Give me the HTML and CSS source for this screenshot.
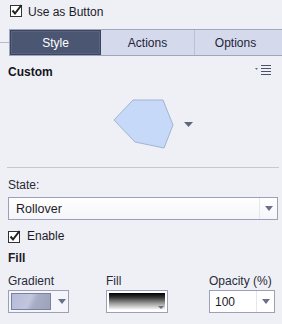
FILE: index.html
```html
<!DOCTYPE html>
<html lang="en">
<head>
  <meta charset="UTF-8">
  <title>Button Style</title>
  <link rel="stylesheet" href="styles.css">
</head>
<body>

  <div class="check-row top">
    <svg class="check" width="13" height="13" viewBox="0 0 13 13">
      <rect x="0.5" y="1.5" width="11" height="11" fill="#fff" stroke="#333"/>
      <path d="M2.5 6.5 L5 9.5 L11.5 1" fill="none" stroke="#222" stroke-width="2"/>
    </svg>
    <span>Use as Button</span>
  </div>

  <div class="tabs-row">
    <div class="tabs-lead"></div>
    <div class="tabs">
      <div class="tab active">Style</div>
      <div class="tab">Actions</div>
      <div class="tab">Options</div>
    </div>
  </div>

  <div class="section-head">
    <span class="bold">Custom</span>
    <svg class="menu-icon" width="17" height="11" viewBox="0 0 17 11">
      <path d="M0 3 L3 3 L1.5 5 Z" fill="#6a7088"/>
      <rect x="6" y="0" width="10" height="1" fill="#4a5270"/>
      <rect x="6" y="3" width="10" height="1" fill="#4a5270"/>
      <rect x="6" y="6" width="10" height="1" fill="#4a5270"/>
      <rect x="6" y="9" width="10" height="1" fill="#4a5270"/>
    </svg>
  </div>

  <div class="shape-row">
    <svg width="84" height="52" viewBox="0 0 84 52">
      <polygon points="21,2 51,2 61,27 52,50 23,44 2,22" fill="#c6d9f9" stroke="#a3b3d2" stroke-width="1"/>
      <path d="M72 24 L81 24 L76.5 29 Z" fill="#5e6680"/>
    </svg>
  </div>

  <div class="separator"></div>

  <div class="label state-label">State:</div>

  <div class="select">
    <span>Rollover</span>
    <div class="select-btn"><span class="arrow"></span></div>
  </div>

  <div class="check-row enable">
    <svg class="check" width="13" height="13" viewBox="0 0 13 13">
      <rect x="0.5" y="1.5" width="11" height="11" fill="#fff" stroke="#333"/>
      <path d="M2.5 6.5 L5 9.5 L11.5 1" fill="none" stroke="#222" stroke-width="2"/>
    </svg>
    <span>Enable</span>
  </div>

  <div class="bold fill-head">Fill</div>

  <div class="fill-grid">
    <div class="label">Gradient</div>
    <div class="label">Fill</div>
    <div class="label">Opacity (%)</div>

    <div class="picker gradient-picker">
      <div class="swatch grad"></div>
      <span class="arrow"></span>
    </div>
    <div class="picker fill-picker">
      <div class="swatch bw"></div>
      <span class="arrow mini"></span>
    </div>
    <div class="picker opacity-picker">
      <span class="value">100</span>
      <div class="select-btn"><span class="arrow"></span></div>
    </div>
  </div>

</body>
</html>
```

FILE: styles.css
```css
* {
  box-sizing: border-box;
}

body {
  margin: 0;
  background: #eff0f6;
  color: #1b1b28;
  font-family: 'Liberation Sans', Arial, sans-serif;
  font-size: 12px;
  width: 282px;
  height: 324px;
  overflow: hidden;
}

.bold {
  font-weight: bold;
  font-size: 12px;
}

.check-row {
  display: flex;
  align-items: center;
  gap: 5px;
}

.check-row.top {
  height: 20px;
  padding-left: 10px;
  margin-bottom: 9px;
}

.check-row.top span {
  padding-top: 3px;
}

.tabs-row {
  display: flex;
  align-items: center;
  height: 27px;
}

.tabs-lead {
  width: 9px;
  height: 1px;
  background: #b8bac8;
}

.tabs {
  flex: 1;
  display: flex;
  height: 27px;
  background: #d4d9ec;
  border-top: 1px solid #a2a6bc;
  border-bottom: 1px solid #a2a6bc;
  border-left: 1px solid #a2a6bc;
}

.tab {
  display: flex;
  align-items: center;
  justify-content: center;
  color: #1e2438;
  font-size: 12px;
}

.tab:nth-child(2) {
  width: 94px;
  border-right: 1px solid #bcc1d6;
}

.tab:nth-child(3) {
  flex: 1;
  padding-right: 6px;
}

.tab.active {
  width: 91px;
  background: #4b5672;
  color: #fff;
  border: 1px solid #3a4360;
  box-shadow: inset 0 0 0 1px #58637e;
}

.section-head {
  display: flex;
  justify-content: space-between;
  align-items: center;
  margin-top: 9px;
  height: 14px;
  padding: 0 10px 0 8px;
}

.section-head .bold {
  color: #141420;
}

.menu-icon {
  margin-top: -4px;
}

.shape-row {
  margin-top: 19px;
  padding-left: 112px;
  height: 52px;
}

.shape-row svg {
  display: block;
}

.separator {
  margin: 17px 3px 0 7px;
  height: 1px;
  background: #c6c7cf;
}

.label {
  color: #2a2a38;
  line-height: 14px;
  white-space: nowrap;
}

.state-label {
  margin: 10px 0 0 8px;
}

.select {
  display: flex;
  align-items: center;
  margin: 5px 4px 0 8px;
  height: 23px;
  border: 1px solid #9ba0b6;
  background: linear-gradient(#ffffff, #f4f5f9);
  padding-left: 7px;
  font-size: 12.5px;
}

.select > span {
  flex: 1;
}

.select-btn {
  width: 18px;
  height: 100%;
  border-left: 1px solid #e6e7ee;
  display: flex;
  align-items: center;
  justify-content: center;
}

.arrow {
  width: 0;
  height: 0;
  border-left: 4px solid transparent;
  border-right: 4px solid transparent;
  border-top: 5px solid #6a7088;
}

.check-row.enable {
  margin: 8px 0 0 8px;
  height: 16px;
  gap: 6px;
}

.fill-head {
  margin: 7px 0 0 8px;
  line-height: 14px;
}

.fill-grid {
  display: grid;
  grid-template-columns: 98px 103px 66px;
  row-gap: 2px;
  margin: 9px 0 0 8px;
}

.picker {
  position: relative;
  display: flex;
  align-items: center;
  height: 23px;
  border: 1px solid #9ba0b6;
  background: #fff;
}

.gradient-picker {
  width: 61px;
  padding-left: 2px;
  gap: 7px;
  background: #f4f5fa;
}

.swatch.grad {
  width: 40px;
  height: 17px;
  border: 1px solid #7c819a;
  background: linear-gradient(115deg, #b5bbd9 0%, #c2c6de 45%, #a8adc6 60%, #9da2bb 100%);
}

.fill-picker {
  width: 62px;
  padding: 2px;
  background: #fff;
}

.swatch.bw {
  width: 100%;
  height: 100%;
  background: linear-gradient(#000 0%, #333 25%, #999 60%, #fff 100%);
}

.arrow.mini {
  position: absolute;
  right: 3px;
  bottom: 3px;
  border-left-width: 3px;
  border-right-width: 3px;
  border-top: 3px solid #6a7088;
}

.opacity-picker {
  width: 66px;
  padding-left: 5px;
}

.opacity-picker .value {
  flex: 1;
}
```
